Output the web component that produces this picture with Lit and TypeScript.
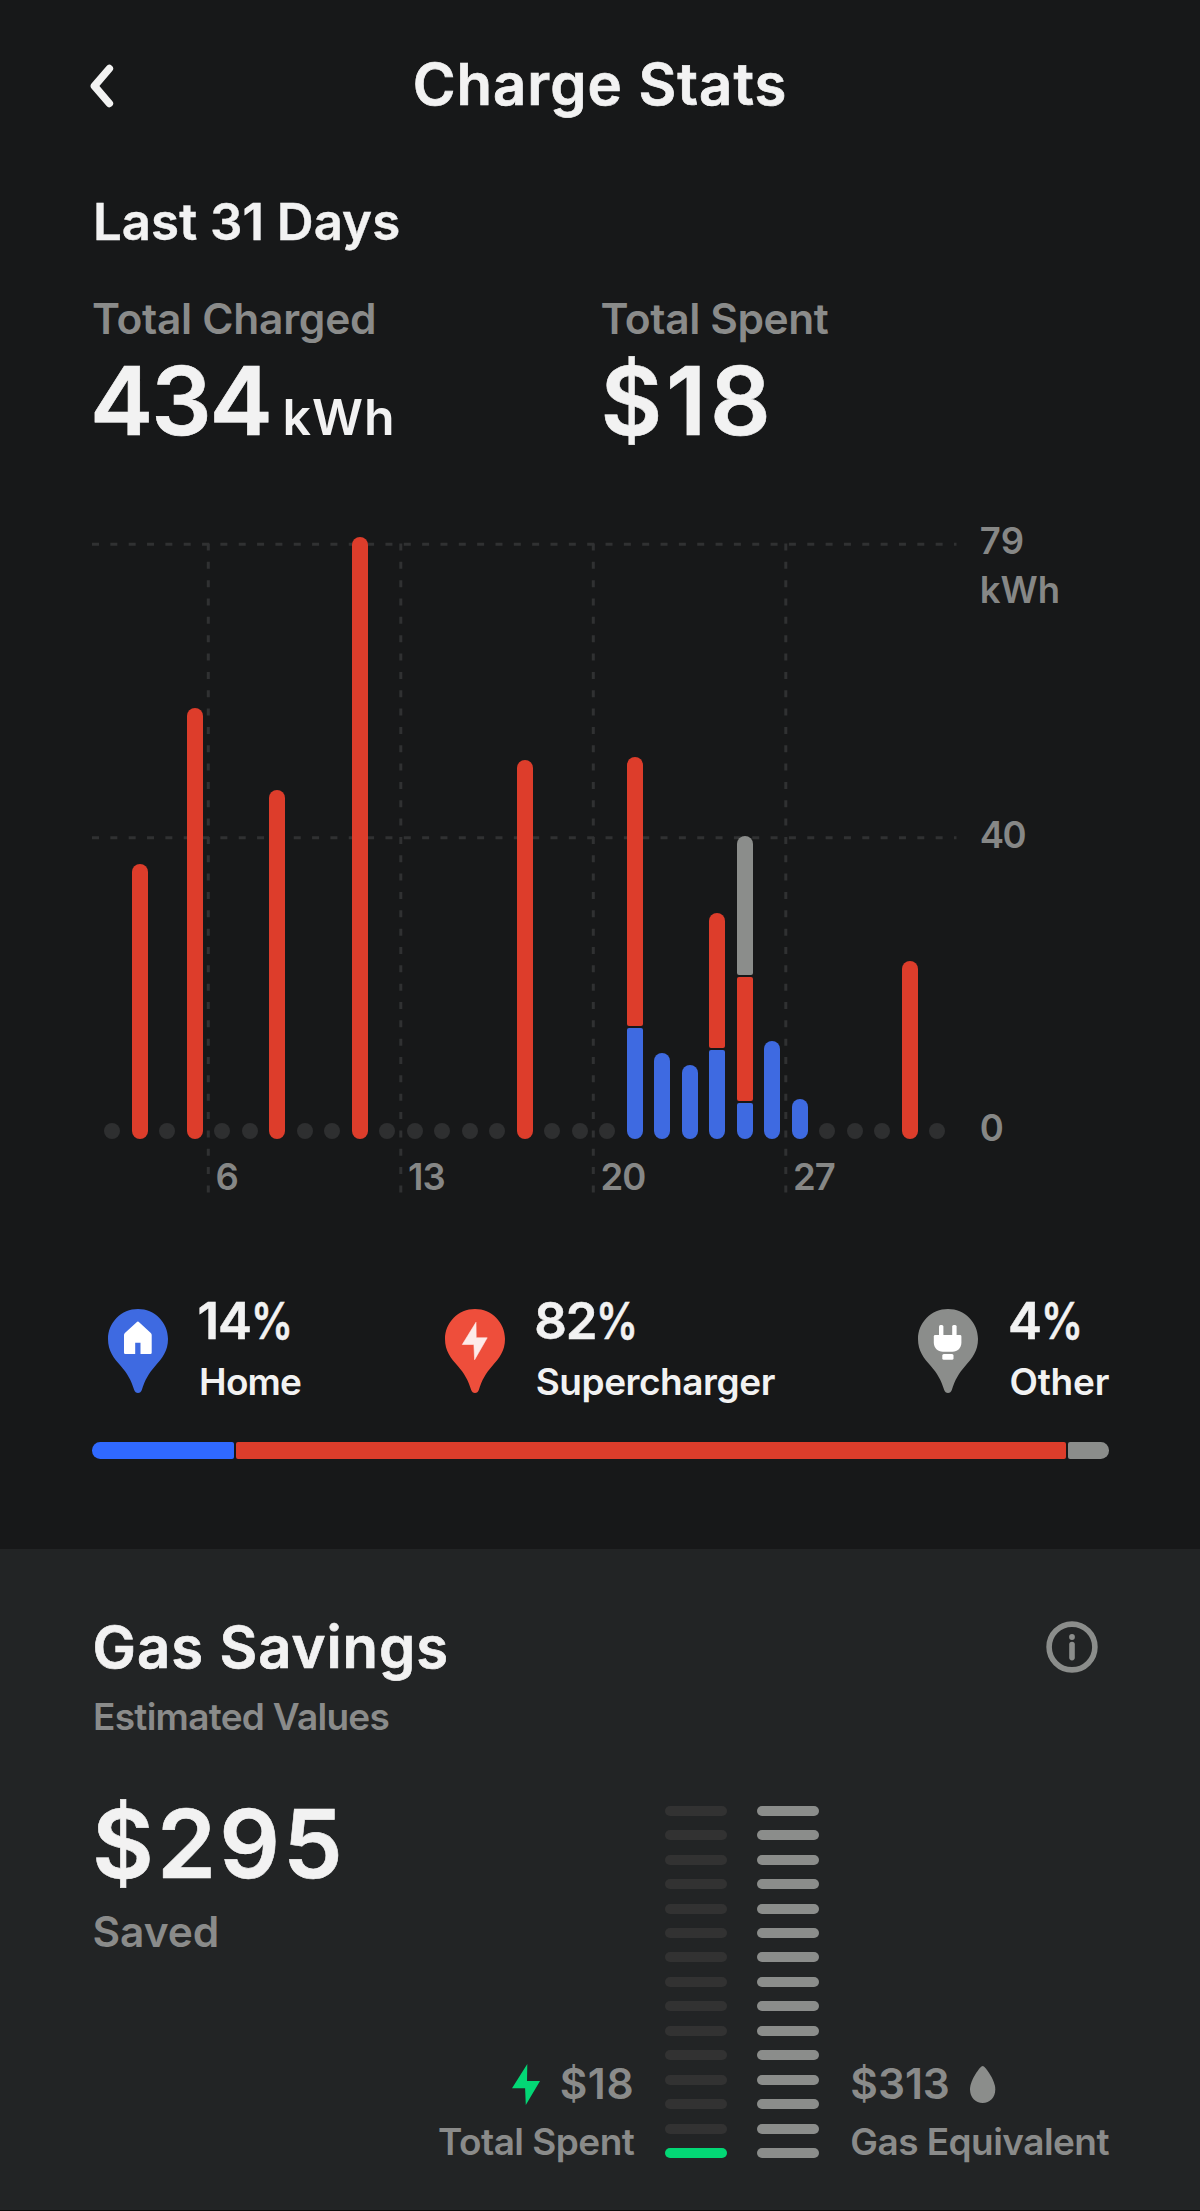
import { LitElement, html, svg, css } from "lit";
import { customElement, property } from "lit/decorators.js";
import { classMap } from "lit/directives/class-map.js";
import { styleMap } from "lit/directives/style-map.js";

type Source = "home" | "supercharger" | "other";
interface Segment { source: Source; height: number }

/** Charging sessions by day index; segments run from top to bottom, heights in px. */
const SESSIONS: Record<number, Segment[]> = {
  1: [{ source: "supercharger", height: 275.5 }],
  3: [{ source: "supercharger", height: 431.5 }],
  6: [{ source: "supercharger", height: 349 }],
  9: [{ source: "supercharger", height: 602.5 }],
  15: [{ source: "supercharger", height: 379.5 }],
  19: [{ source: "supercharger", height: 269.3 }, { source: "home", height: 110.7 }],
  20: [{ source: "home", height: 86.3 }],
  21: [{ source: "home", height: 73.7 }],
  22: [{ source: "supercharger", height: 134.8 }, { source: "home", height: 89.5 }],
  23: [
    { source: "other", height: 139.3 },
    { source: "supercharger", height: 123.2 },
    { source: "home", height: 36.5 },
  ],
  24: [{ source: "home", height: 98.5 }],
  25: [{ source: "home", height: 40.5 }],
  29: [{ source: "supercharger", height: 177.8 }],
};
const DAYS = Array.from({ length: 31 }, (_, i) => SESSIONS[i] ?? []);
const WEEKS = [6, 13, 20, 27];

@customElement("charge-chart")
export class ChargeChart extends LitElement {
  static styles = css`
    :host { display: grid; grid-template-columns: 887.8px 1fr; }
    .plot { display: grid; grid-template: 681px / 100%; }
    .grid, .bars, .weeks { grid-area: 1 / 1; }
    .grid { width: 870px; height: 681px; }
    .line { stroke: #303132; stroke-width: 3; stroke-dasharray: 7 11.34; fill: none; }
    .bars { display: flex; align-items: flex-end; align-self: start; height: 623px; padding-left: 12px; gap: 11.5px; }
    .day { display: flex; flex-direction: column; gap: 2px; width: 16px; border-radius: 8px; overflow: hidden; flex: none; }
    .segment { border-radius: 2px; }
    .home { background: #3e6ae1; }
    .supercharger { background: #dd3d2b; }
    .other { background: #8b8d8b; }
    .empty { height: 16px; background: #2e2f30; }
    .weeks { display: flex; align-self: end; padding-left: 123.4px; height: 39.6px; line-height: 40px; letter-spacing: -0.8px; }
    .week { width: 192.5px; flex: none; }
    .axis { display: grid; grid-template-rows: 293.5px 293.5px auto; line-height: 49px; padding-top: 1px; letter-spacing: -1.5px; }
    .top { letter-spacing: 0.3px; }
    .unit { letter-spacing: 0; display: block; }
  `;
  render() {
    return html`
      <div class="plot">
        <svg class="grid" viewBox="0 0 870 681">
          ${[28.3, 321.7].map((y) => svg`<path class="line" d="M0 ${y}H864.5"/>`)}
          ${WEEKS.map((_, i) => svg`<path class="line" d="M${116.3 + i * 192.5} 27.5V676.5"/>`)}
        </svg>
        <div class="bars">
          ${DAYS.map((segments) => html`
            <div class=${classMap({ day: true, empty: segments.length === 0 })}>
              ${segments.map((s) => html`<div class="segment ${s.source}" style=${styleMap({ height: `${s.height}px` })}></div>`)}
            </div>`)}
        </div>
        <div class="weeks">${WEEKS.map((w) => html`<span class="week">${w}</span>`)}</div>
      </div>
      <div class="axis">
        <div><span class="top">79</span><span class="unit">kWh</span></div>
        <div>40</div>
        <div>0</div>
      </div>`;
  }
}

const PIN = "M30 0C46.6 0 60 13.4 60 30C60 42 54.2 49.3 47.2 57C41 64 36.8 71 33.8 81Q32.8 84 30 84Q27.2 84 26.2 81C23.2 71 19 64 12.8 57C5.8 49.3 0 42 0 30C0 13.4 13.4 0 30 0Z";
const GLYPHS = {
  home: svg`<path fill="#fff" d="M29.2 12.8Q29.9 12.2 30.6 12.8L42.8 24Q43.7 24.8 43.7 26V43.8Q43.7 45 42.5 45H32.5V33.8H27.2V45H17.2Q16 45 16 43.8V26Q16 24.8 16.9 24Z"/>`,
  supercharger: svg`<path fill="#fdebe9" d="M31 13.3L31.2 28.8H42.2L29.6 50.7L28.9 35.5H17.3Z" stroke="#fdebe9" stroke-width=".6" stroke-linejoin="round"/>`,
  other: svg`<g fill="#fff"><rect x="21" y="16" width="4.4" height="14" rx="1.5"/><rect x="34.2" y="16" width="4.4" height="14" rx="1.5"/><path d="M17.2 26H42Q43.4 26 43.4 27.4V33.5C43.4 39 39.5 42.7 34.5 42.7H24.8C19.8 42.7 15.8 39 15.8 33.5V27.4Q15.8 26 17.2 26Z"/><rect x="24.3" y="45" width="11.2" height="5.8" rx="1.5"/></g>`,
};

@customElement("source-legend")
export class SourceLegend extends LitElement {
  @property() source: Source = "home";
  @property({ type: Number }) percent = 0;
  @property() label = "";
  static styles = css`
    :host { display: flex; color: #f2f2f2; }
    .pin { width: 60px; height: 84px; margin: 12.6px 32.6px 0 0; flex: none; }
    .pin-home { fill: #3e6ae1; }
    .pin-supercharger { fill: #ee4e3b; }
    .pin-other { fill: #8b8d8b; }
    .text { margin: 0 0.6px 0 -1px; }
    .value { font: 600 51px/50px Inter, sans-serif; letter-spacing: -1.2px; margin-bottom: 16px; height: 50px; white-space: nowrap; margin-left: -2px; -webkit-text-stroke: 0.5px currentColor; }
    .sign { display: inline-block; width: 38px; transform: scaleX(0.82); transform-origin: left; }
    .name { font: 600 37px/40px Inter, sans-serif; letter-spacing: -0.45px; margin-left: -0.5px; }
    .name.home { letter-spacing: -0.8px; }
    .name.other { letter-spacing: -0.2px; margin-right: -0.8px; }
  `;
  render() {
    return html`
      <svg class="pin" viewBox="0 0 60 84"><path class="pin-${this.source}" d=${PIN}/>${GLYPHS[this.source]}</svg>
      <div class="text">
        <div class="value">${this.percent}<span class="sign">%</span></div>
        <div class="name ${this.source}">${this.label}</div>
      </div>`;
  }
}

@customElement("level-stack")
export class LevelStack extends LitElement {
  @property({ type: Number }) filled = 15;
  @property({ type: Boolean }) green = false;
  static styles = css`
    :host { display: flex; flex-direction: column; gap: 14.45px; width: 61.8px; flex: none; }
    .level { height: 10px; border-radius: 5px; background: #323232; }
    .on { background: #8b8d8b; }
    .on.green { background: #03d775; }
  `;
  render() {
    return Array.from({ length: 15 }, (_, i) =>
      html`<div class=${classMap({ level: true, on: i >= 15 - this.filled, green: this.green })}></div>`);
  }
}

@customElement("app-root")
export class AppRoot extends LitElement {
  static styles = css`
    :host { display: block; height: 2211px; overflow: hidden; box-sizing: border-box; background: #171819; color: #f2f2f2; font: 600 36.5px Inter, "Open Sans", sans-serif; }
    .stats { height: 1549px; padding: 54px 91px 0 92px; box-sizing: border-box; }
    .header { display: grid; grid-template-columns: 60px 1fr 60px; align-items: start; margin: 0 0 77.5px -1px; }
    .back { width: 26px; height: 46px; margin: 9px 0 0 -3px; }
    .title { font: 600 58px/60px Inter, sans-serif; letter-spacing: 1.05px; text-align: center; -webkit-text-stroke: 0.7px currentColor; }
    .period { font: 600 51px/60px Inter, sans-serif; letter-spacing: 0; padding-left: 1px; -webkit-text-stroke: 0.4px currentColor; }
    .totals { display: grid; grid-template-columns: 508.5px 1fr; margin: 42.5px 0 67px; }
    .label { font: 600 42.5px/50px Inter, sans-serif; color: #8a8b8a; letter-spacing: -0.29px; }
    .label.spent { letter-spacing: -0.4px; }
    .figure { display: flex; align-items: baseline; height: 96px; font: 600 95px/96px Inter, sans-serif; margin: 9px 0 0 -2px; letter-spacing: -2.1px; -webkit-text-stroke: 0.6px currentColor; }
    .figure.wide { letter-spacing: 3.8px; margin-left: 0; }
    .unit { font-size: 50px; line-height: 60px; letter-spacing: 1.07px; margin-left: 11.8px; -webkit-text-stroke: 0; }
    charge-chart { color: #868786; }
    .legend { display: flex; justify-content: space-between; padding-left: 16px; margin: 99.2px 0 40.3px; }
    .split { display: flex; gap: 2px; height: 16.3px; border-radius: 8.2px; overflow: hidden; }
    .part { border-radius: 2px; }
    .part.home { width: 142.3px; background: #3069ff; }
    .part.supercharger { flex: 1; background: #dd3d2b; }
    .part.other { width: 41.2px; background: #8b8d8b; }
    .gas { height: 662px; box-sizing: border-box; background: #222425; border-bottom: 1px solid #0c0d0d; padding: 68.4px 91px 0 92px; }
    .gas-head { display: flex; justify-content: space-between; }
    .gas-title { font: 600 58px/60px Inter, sans-serif; letter-spacing: 0.95px; padding-left: 0.5px; -webkit-text-stroke: 0.7px currentColor; }
    .info { width: 52px; height: 52px; margin: 3.6px 11.5px 0 0; }
    .caption { font: 600 37px/40px Inter, sans-serif; color: #8a8b8a; letter-spacing: -0.55px; white-space: nowrap; }
    .estimate { margin-top: 20px; letter-spacing: -0.72px; padding-left: 1px; }
    .savings { display: flex; align-items: flex-end; height: 365px; margin-top: 58.4px; }
    .saved { flex: 1; align-self: flex-start; }
    .saved .figure { margin: 0 0 15.4px; letter-spacing: 3.1px; }
    .saved .label { letter-spacing: -0.1px; padding-left: 0.5px; }
    .cost { display: flex; flex-direction: column; gap: 12.3px; margin-bottom: -1px; }
    .amount { display: flex; font: 600 42.5px/50px Inter, sans-serif; color: #8a8b8a; letter-spacing: -0.05px; }
    .electric { align-items: flex-end; }
    .electric .amount { letter-spacing: 0.6px; }
    .bolt { width: 28px; height: 41px; margin: 4.5px 20px 0 0; fill: #03d775; }
    .drop { width: 25.3px; height: 37px; margin: 6.8px 0 0 20.4px; fill: #8b8d8b; }
    .stacks { display: flex; gap: 30.2px; margin: 0 31.1px 2.8px 31.2px; }
    .fuel { width: 258.7px; }
  `;
  render() {
    return html`
      <section class="stats">
        <header class="header">
          <svg class="back" viewBox="0 0 26 46"><path d="M21.3 5.6L6.4 23L21.3 40.4" fill="none" stroke="#f2f2f2" stroke-width="7.6" stroke-linecap="round" stroke-linejoin="round"/></svg>
          <div class="title">Charge Stats</div>
        </header>
        <div class="period">Last 31 Days</div>
        <div class="totals">
          <div>
            <div class="label">Total Charged</div>
            <div class="figure">434<span class="unit">kWh</span></div>
          </div>
          <div>
            <div class="label spent">Total Spent</div>
            <div class="figure wide">$18</div>
          </div>
        </div>
        <charge-chart></charge-chart>
        <div class="legend">
          <source-legend source="home" percent="14" label="Home"></source-legend>
          <source-legend source="supercharger" percent="82" label="Supercharger"></source-legend>
          <source-legend source="other" percent="4" label="Other"></source-legend>
        </div>
        <div class="split">
          <div class="part home"></div>
          <div class="part supercharger"></div>
          <div class="part other"></div>
        </div>
      </section>
      <section class="gas">
        <div class="gas-head">
          <div class="gas-title">Gas Savings</div>
          <svg class="info" viewBox="0 0 52 52"><circle cx="26" cy="26" r="22.9" fill="none" stroke="#8b8d8b" stroke-width="5.6"/><circle cx="26" cy="16" r="2.9" fill="#8b8d8b"/><rect x="23.2" y="20.8" width="5.6" height="18.6" rx="2.8" fill="#8b8d8b"/></svg>
        </div>
        <div class="caption estimate">Estimated Values</div>
        <div class="savings">
          <div class="saved">
            <div class="figure">$295</div>
            <div class="label">Saved</div>
          </div>
          <div class="cost electric">
            <div class="amount"><svg class="bolt" viewBox="0 0 28 41"><path d="M15.3 0L15 17H28L13.8 41L13.1 24.2H0Z"/></svg>$18</div>
            <div class="caption">Total Spent</div>
          </div>
          <div class="stacks">
            <level-stack filled="1" green></level-stack>
            <level-stack filled="15"></level-stack>
          </div>
          <div class="cost fuel">
            <div class="amount">$313<svg class="drop" viewBox="0 0 25.3 37"><path d="M12.65 0C15 0 25.3 14 25.3 23.2C25.3 31.5 19.8 37 12.65 37S0 31.5 0 23.2C0 14 10.3 0 12.65 0Z"/></svg></div>
            <div class="caption">Gas Equivalent</div>
          </div>
        </div>
      </section>`;
  }
}
